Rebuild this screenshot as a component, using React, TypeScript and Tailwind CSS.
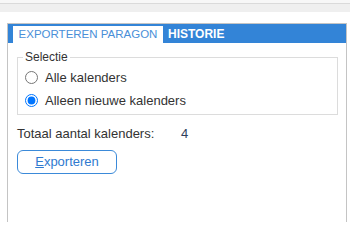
import { useState } from 'react';

const tabs = ['EXPORTEREN PARAGON', 'HISTORIE'];

export default function App() {
  const [activeTab, setActiveTab] = useState(0);
  const [selectie, setSelectie] = useState<'alle' | 'nieuw'>('nieuw');
  const total = 4;

  return (
    <div className="w-[350px] h-[222px] overflow-hidden bg-white text-[13px] text-[#333] font-['Liberation_Sans',Arial,sans-serif]">
      {/* toolbar strip */}
      <div className="h-[3px] bg-[#f7f7f7]" />
      <div className="h-[1px] bg-[#dadada]" />
      <div className="h-[8px] bg-[#efefef]" />

      <div className="mt-[11px] ml-[7px] w-[340px] h-[200px] border border-b-0 border-[#c4c4c4]">
        {/* tabs */}
        <div className="h-[19px] bg-[#3384d7] flex items-end pl-[5px]">
          {tabs.map((tab, i) =>
            i === activeTab ? (
              <button
                key={tab}
                onClick={() => setActiveTab(i)}
                className="h-[17px] w-[150px] bg-white text-[11.5px] leading-[17px] text-[#4a8fd8] text-center"
              >
                {tab}
              </button>
            ) : (
              <button
                key={tab}
                onClick={() => setActiveTab(i)}
                className="h-[17px] pl-[5px] pr-[6px] text-[12px] leading-[17px] font-bold text-white"
              >
                {tab}
              </button>
            )
          )}
        </div>

        <div className="pl-[9px] pr-[8px]">
          <fieldset className="mt-[8px] border border-[#dcdcdc] pl-[5px] pt-[3px] pb-[2px]">
            <legend className="px-[2px] text-[12px] leading-[12px]">Selectie</legend>
            <label className="h-[23px] flex items-center gap-[7px] ml-[2px]">
              <input
                type="radio"
                name="selectie"
                className="m-0 w-[13px] h-[13px]"
                checked={selectie === 'alle'}
                onChange={() => setSelectie('alle')}
              />
              Alle kalenders
            </label>
            <label className="h-[23px] flex items-center gap-[7px] ml-[2px]">
              <input
                type="radio"
                name="selectie"
                className="m-0 w-[13px] h-[13px]"
                checked={selectie === 'nieuw'}
                onChange={() => setSelectie('nieuw')}
              />
              Alleen nieuwe kalenders
            </label>
          </fieldset>

          <div className="mt-[10px] h-[18px] flex items-center">
            <span className="w-[164px]">Totaal aantal kalenders:</span>
            <span className="text-[#2f3e5c]">{total}</span>
          </div>

          <button className="mt-[7px] w-[100px] h-[24px] rounded-[6px] border border-[#3b8ad9] text-[13px] text-[#2f7ad0]">
            <span className="underline">E</span>xporteren
          </button>
        </div>
      </div>
    </div>
  );
}
